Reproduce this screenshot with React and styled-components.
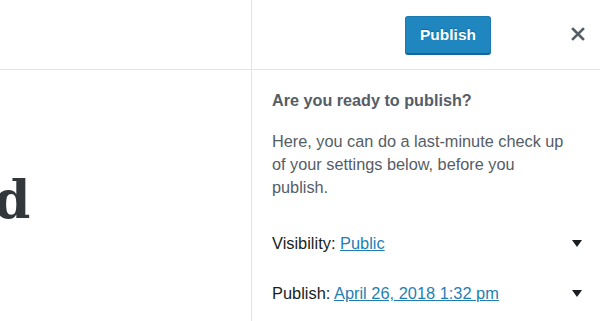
import React from "react";
import styled, { createGlobalStyle } from "styled-components";

const Global = createGlobalStyle`
  html, body { margin: 0; padding: 0; background: #fff; }
  body { font-family: "Liberation Sans", Arial, sans-serif; }
  * { box-sizing: border-box; }
`;

const Page = styled.div`
  display: flex;
  width: 600px;
  height: 321px;
  overflow: hidden;
  background: #fff;
`;

const Editor = styled.div`
  width: 252px;
  flex: none;
  border-right: 1px solid #e2e4e7;
  display: flex;
  flex-direction: column;
  overflow: hidden;
`;

const Header = styled.div`
  height: 70px;
  flex: none;
  border-bottom: 1px solid #e2e4e7;
  display: flex;
  align-items: center;
  justify-content: flex-end;
  gap: ${(p) => p.$gap || 0}px;
  padding-right: ${(p) => p.$pr || 0}px;
`;

const EditorBody = styled.div`
  padding-top: 104px;
`;

const Title = styled.h1`
  margin: 0 0 0 -6px;
  font-family: "DejaVu Serif", "Liberation Serif", serif;
  font-weight: bold;
  font-size: 52px;
  line-height: 1;
  color: #32373c;
`;

const Sidebar = styled.div`
  flex: 1;
  display: flex;
  flex-direction: column;
`;

const PrimaryButton = styled.button`
  height: 38px;
  padding: 0 14px;
  border: 1px solid #1b7bb0;
  border-bottom-color: #10699a;
  border-radius: 3px;
  background: #1f86bf;
  box-shadow: 0 1px 0 #10699a;
  color: #fff;
  font-family: "Liberation Sans", Arial, sans-serif;
  font-weight: bold;
  font-size: 15.5px;
  text-shadow: 0 -1px 1px #10699a;
  cursor: pointer;
`;

const CloseButton = styled.button`
  width: 24px;
  height: 24px;
  padding: 0;
  border: none;
  background: none;
  display: flex;
  align-items: center;
  justify-content: center;
  color: #555d66;
  margin-bottom: 1px;
`;

const Panel = styled.div`
  padding: 20px 18px 0 20px;
`;

const Heading = styled.div`
  font-weight: bold;
  font-size: 16.2px;
  line-height: 21px;
  color: #555d66;
`;

const Intro = styled.p`
  margin: 19px 0 0;
  max-width: 302px;
  font-size: 16.3px;
  line-height: 23px;
  color: #555d66;
`;

const Rows = styled.div`
  display: flex;
  flex-direction: column;
  gap: 27px;
  margin-top: 33px;
`;

const Row = styled.div`
  display: flex;
  align-items: center;
  justify-content: space-between;
  font-size: 16.4px;
  line-height: 23px;
  color: #191e23;
`;

const Link = styled.a`
  color: #1f7fb4;
  text-decoration: underline;
`;

const Arrow = () => (
  <svg width="10" height="7" viewBox="0 0 10 7" aria-hidden="true">
    <path d="M0 0h10L5 7z" fill="#191e23" />
  </svg>
);

const CloseIcon = () => (
  <svg width="14" height="14" viewBox="0 0 14 14" aria-hidden="true">
    <path d="M2 2l10 10M12 2L2 12" stroke="#555d66" strokeWidth="2.6" strokeLinecap="square" />
  </svg>
);

export default function App() {
  return (
    <>
      <Global />
      <Page>
        <Editor>
          <Header />
          <EditorBody>
            <Title>d</Title>
          </EditorBody>
        </Editor>
        <Sidebar>
          <Header $gap={75} $pr={10}>
            <PrimaryButton>Publish</PrimaryButton>
            <CloseButton aria-label="Close">
              <CloseIcon />
            </CloseButton>
          </Header>
          <Panel>
            <Heading>Are you ready to publish?</Heading>
            <Intro>
              Here, you can do a last-minute check up of your settings below, before you publish.
            </Intro>
            <Rows>
              <Row>
                <span>
                  Visibility: <Link href="#">Public</Link>
                </span>
                <Arrow />
              </Row>
              <Row>
                <span>
                  Publish: <Link href="#">April 26, 2018 1:32 pm</Link>
                </span>
                <Arrow />
              </Row>
            </Rows>
          </Panel>
        </Sidebar>
      </Page>
    </>
  );
}
